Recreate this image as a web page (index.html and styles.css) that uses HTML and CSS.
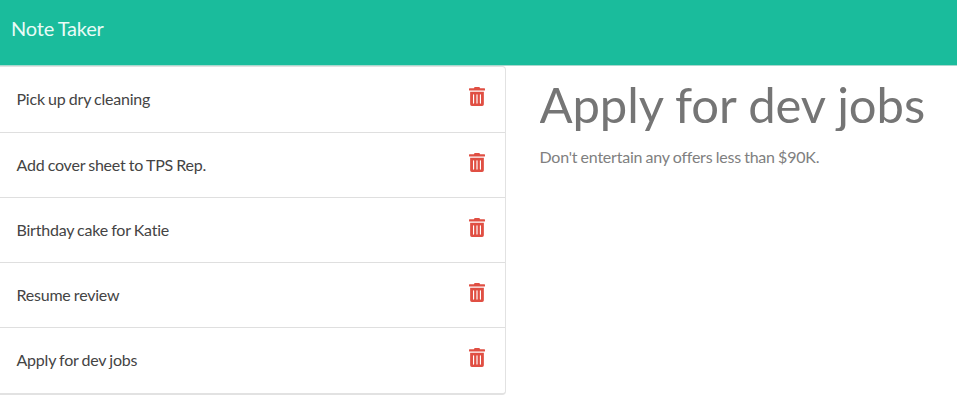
FILE: index.html
```html
<!DOCTYPE html>
<html lang="en">
<head>
<meta charset="utf-8">
<title>Note Taker</title>
<link rel="stylesheet" href="styles.css">
</head>
<body>
<svg width="0" height="0" class="sprite"><symbol id="trash" viewBox="0 0 448 512" preserveAspectRatio="none"><path d="M32 464a48 48 0 0 0 48 48h288a48 48 0 0 0 48-48V128H32zm272-256a16 16 0 0 1 32 0v224a16 16 0 0 1-32 0zm-96 0a16 16 0 0 1 32 0v224a16 16 0 0 1-32 0zm-96 0a16 16 0 0 1 32 0v224a16 16 0 0 1-32 0zM432 32H312l-9.400-18.700A24 24 0 0 0 281.100 0H166.800a23.720 23.720 0 0 0-21.400 13.300L136 32H16A16 16 0 0 0 0 48v32a16 16 0 0 0 16 16h416a16 16 0 0 0 16-16V48a16 16 0 0 0-16-16z"/></symbol></svg>
<header class="navbar"><span class="brand">Note Taker</span></header>
<main class="layout">
<ul class="notes">
<li class="note"><span>Pick up dry cleaning</span><svg class="icon"><use href="#trash"/></svg></li>
<li class="note"><span>Add cover sheet to TPS Rep.</span><svg class="icon"><use href="#trash"/></svg></li>
<li class="note"><span>Birthday cake for Katie</span><svg class="icon"><use href="#trash"/></svg></li>
<li class="note"><span>Resume review</span><svg class="icon"><use href="#trash"/></svg></li>
<li class="note"><span>Apply for dev jobs</span><svg class="icon"><use href="#trash"/></svg></li>
</ul>
<section class="detail">
<h1 class="title">Apply for dev jobs</h1>
<p class="text">Don't entertain any offers less than $90K.</p>
</section>
</main>
</body>
</html>
```
FILE: styles.css
```css
* { box-sizing: border-box; }
body { margin: 0; background: #fff; font-family: Lato, sans-serif; font-size: 16px; line-height: 24px; letter-spacing: -0.22px; word-spacing: -0.6px; color: #444; overflow: hidden; }
.sprite { display: block; }
.navbar { height: 66px; background: #1abc9c; padding: 13px 11px; border-bottom: 1px solid #a9d8ce; }
.brand { display: block; font-size: 20px; line-height: 30px; letter-spacing: -0.2px; color: #e9fbf6; }
.layout { display: flex; align-items: flex-start; }
.notes { list-style: none; margin: 0; padding: 0; width: 506px; border: 1px solid #e2e2e2; border-width: 1px 1px 2px 0; border-radius: 0 4px 4px 0; }
.note { display: flex; justify-content: space-between; height: 65px; padding: 20px 20px 0 16.5px; border-bottom: 1px solid #dfdfdf; }
.note:first-child { height: 66px; }
.note:last-child { border-bottom: 0; }
.icon { width: 16px; height: 19px; fill: #e04f43; }
.detail { padding: 14px 0 0 33.5px; }
.title { margin: 0; height: 51px; overflow: hidden; font-size: 49px; line-height: 48px; letter-spacing: -0.1px; word-spacing: 0; font-weight: 400; color: #757575; white-space: nowrap; }
.text { margin: 13.500px 0 0; color: #808080; }
```
